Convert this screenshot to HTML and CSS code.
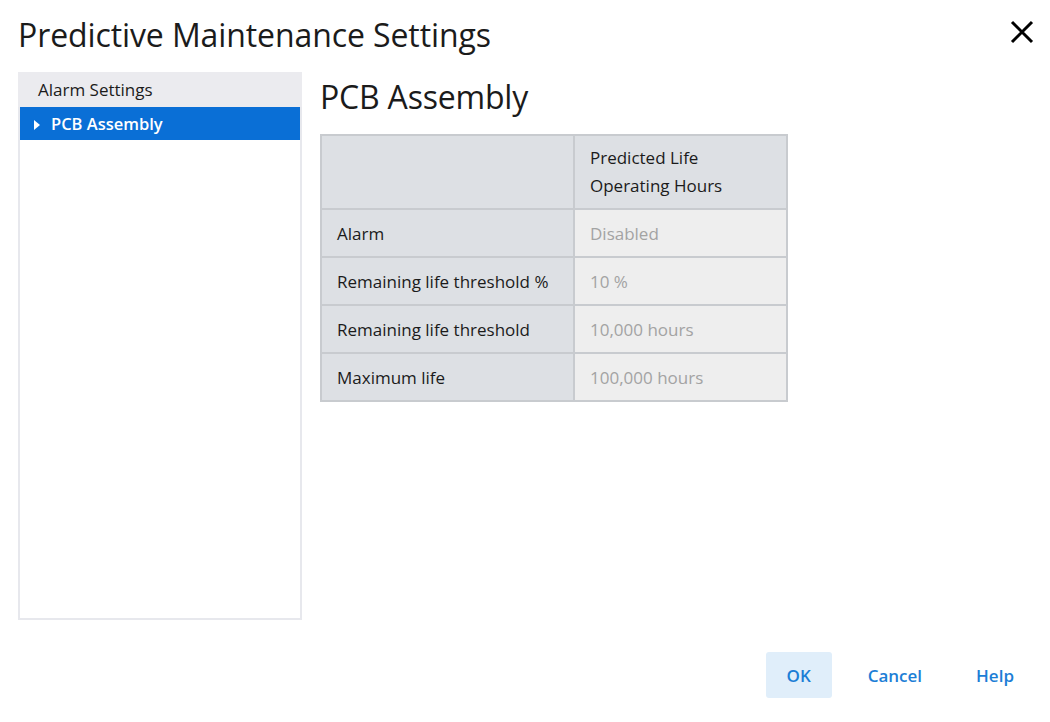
FILE: index.html
```html
<!DOCTYPE html>
<html>
<head>
    <meta charset="utf-8" />
    <meta name="viewport" content="width=device-width,initial-scale=1" />
    <title>Predictive Maintenance Settings</title>
    <link rel="stylesheet" href="styles.css">
</head>
<body>
    <div class="dialog">
        <div class="dialog-head">
            <h1>Predictive Maintenance Settings</h1>
            <button class="close" title="Close">
                <svg width="24" height="24" viewBox="0 0 24 24">
                    <path d="M2 2 L22 22 M22 2 L2 22" stroke="#000" stroke-width="3" fill="none"/>
                </svg>
            </button>
        </div>

        <div class="dialog-body">
            <div class="tree">
                <div class="tree-head">Alarm Settings</div>
                <div class="tree-item selected"><span class="caret"></span>PCB Assembly</div>
            </div>

            <div class="pane">
                <h2>PCB Assembly</h2>
                <table class="grid">
                    <tr>
                        <th class="corner"></th>
                        <th class="col-head">Predicted Life<br>Operating Hours</th>
                    </tr>
                    <tr>
                        <th>Alarm</th>
                        <td>Disabled</td>
                    </tr>
                    <tr>
                        <th>Remaining life threshold %</th>
                        <td>10 %</td>
                    </tr>
                    <tr>
                        <th>Remaining life threshold</th>
                        <td>10,000 hours</td>
                    </tr>
                    <tr>
                        <th>Maximum life</th>
                        <td>100,000 hours</td>
                    </tr>
                </table>
            </div>
        </div>

        <div class="dialog-foot">
            <button class="btn primary">OK</button>
            <button class="btn">Cancel</button>
            <button class="btn">Help</button>
        </div>
    </div>
</body>
</html>
```

FILE: styles.css
```css
* {margin: 0; padding: 0; box-sizing: border-box;}

body {
    background: #fff;
    font-family: "Open Sans", "Noto Sans", sans-serif;
    color: #1b1b1b;
}

.dialog {
    width: 1050px;
    height: 722px;
    padding: 0 18px;
    display: flex;
    flex-flow: column;
}

.dialog-head {
    height: 72px;
    display: flex;
    align-items: flex-start;
    justify-content: space-between;
}
.dialog-head h1 {
    font-size: 32px;
    font-weight: 400;
    letter-spacing: -0.1px;
    line-height: 44px;
    margin-top: 13px;
}
.close {
    border: 0;
    background: none;
    width: 24px;
    height: 24px;
    margin-top: 20px;
    margin-right: -2px;
}
.close svg {display: block;}

.dialog-body {
    display: flex;
    height: 548px;
}

/* left navigation tree */
.tree {
    width: 284px;
    border: 2px solid #e7e8ed;
    border-top: 0;
    background: #fff;
}
.tree-head {
    height: 35px;
    line-height: 35px;
    background: #ebebef;
    font-size: 17px;
    margin: 0 -2px;
    padding-left: 20px;
}
.tree-item {
    height: 33px;
    line-height: 33px;
    font-size: 16.5px;
    padding-left: 14px;
}
.tree-item.selected {
    background: #0a6fd6;
    color: #fff;
    font-weight: 600;
}
.caret {
    display: inline-block;
    width: 0;
    height: 0;
    border-left: 6px solid #fff;
    border-top: 5px solid transparent;
    border-bottom: 5px solid transparent;
    margin-right: 11px;
}

.pane {
    padding-left: 18px;
}
.pane h2 {
    font-size: 32px;
    font-weight: 400;
    height: 62px;
    line-height: 44px;
    padding-top: 3px;
    letter-spacing: -0.2px;
}

/* settings table */
.grid {
    border-collapse: collapse;
    border: 2px solid #c3c6ca;
    font-size: 17px;
}
.grid th, .grid td {
    border: 2px solid #c8cbcf;
    height: 48px;
    text-align: left;
    font-weight: 400;
    padding: 0 15px;
    vertical-align: middle;
}
.grid th {
    background: #dde0e4;
}
.grid .corner {
    width: 253px;
}
.grid .col-head {
    width: 213px;
    height: 74px;
    line-height: 28px;
}
.grid td {
    background: #eeeeee;
    color: #a3a3a3;
}

.dialog-foot {
    flex: 1;
    display: flex;
    justify-content: flex-end;
    align-items: center;
    gap: 18px;
    padding-top: 8px;
}
.btn {
    border: 0;
    background: none;
    font-family: inherit;
    font-size: 17px;
    font-weight: 600;
    color: #1c7ed6;
    height: 46px;
    padding: 0 18px;
    border-radius: 3px;
}
.btn.primary {
    background: #e0eefa;
    width: 66px;
    padding: 0;
}
```
